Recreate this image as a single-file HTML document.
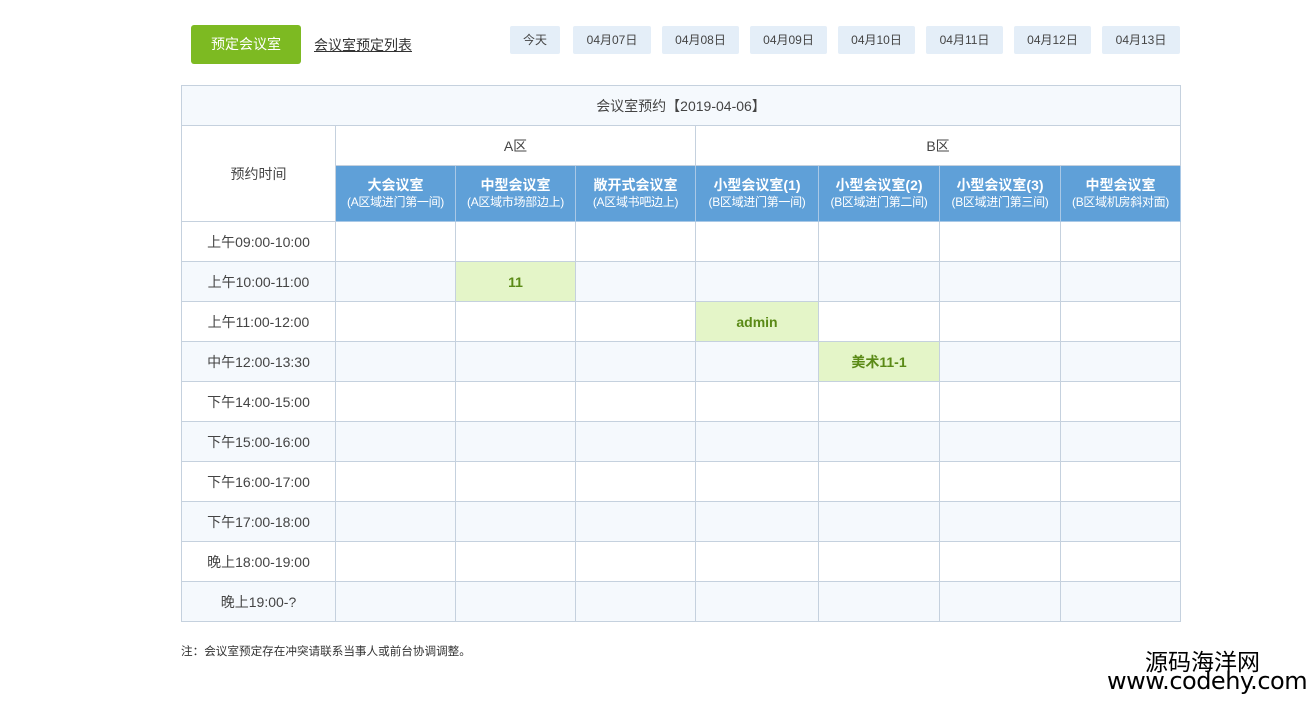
<!DOCTYPE html>
<html><head><meta charset="utf-8"><style>
*{margin:0;padding:0;box-sizing:border-box}
body{width:1312px;height:701px;background:#fff;font-family:"Liberation Sans","Noto Sans CJK SC",sans-serif;color:#333;position:relative;overflow:hidden}
.btn{position:absolute;left:191px;top:25px;width:110px;height:39px;background:#7dba22;color:#fff;border-radius:3px;font-size:14px;line-height:39px;text-align:center}
.lnk{position:absolute;left:314px;top:35px;font-size:14px;color:#333;text-decoration:underline}
.d{position:absolute;top:26px;height:28px;background:#e4eef8;font-size:12px;line-height:28px;text-align:center;color:#444;border-radius:2px}
table{position:absolute;left:181px;top:85px;width:999px;border-collapse:collapse;table-layout:fixed;font-size:14px}
td,th{border:1px solid #c5d1de;text-align:center;font-weight:normal;height:40px;color:#444}
th.h{background:#5fa0d8;color:#fff;height:56px;font-size:14px;line-height:16px;border-color:#a9c8e6}
th.h b{font-weight:bold;display:block}
th.h span{font-size:12px;letter-spacing:-0.3px}
tr.l td{background:#f5f9fd}
td.g{background:#e4f5c8 !important;color:#5a8a16;font-weight:bold}
.note{position:absolute;left:181px;top:643px;font-size:11.6px;color:#333}
.wm1{position:absolute;left:1145px;top:647px;font-size:23px;color:#000;font-family:"Noto Sans CJK SC",sans-serif;line-height:26px}
.wm2{position:absolute;left:1107px;top:668px;font-size:24px;color:#000;font-family:"DejaVu Sans",sans-serif;line-height:26px;letter-spacing:-0.5px}
</style></head><body>
<div class="btn">预定会议室</div>
<div class="lnk">会议室预定列表</div>
<div class="d" style="left:510px;width:50px">今天</div>
<div class="d" style="left:573px;width:78px">04月07日</div>
<div class="d" style="left:662px;width:77px">04月08日</div>
<div class="d" style="left:750px;width:77px">04月09日</div>
<div class="d" style="left:838px;width:77px">04月10日</div>
<div class="d" style="left:926px;width:77px">04月11日</div>
<div class="d" style="left:1014px;width:77px">04月12日</div>
<div class="d" style="left:1102px;width:78px">04月13日</div>
<table>
<colgroup><col style="width:154px"><col style="width:120px"><col style="width:120px"><col style="width:120px"><col style="width:123px"><col style="width:121px"><col style="width:121px"><col style="width:120px"></colgroup>
<tr><td colspan="8" style="background:#f5f9fd">会议室预约【2019-04-06】</td></tr>
<tr><td rowspan="2">预约时间</td><td colspan="3">A区</td><td colspan="4">B区</td></tr>
<tr>
<th class="h"><b>大会议室</b><span>(A区域进门第一间)</span></th>
<th class="h"><b>中型会议室</b><span>(A区域市场部边上)</span></th>
<th class="h"><b>敞开式会议室</b><span>(A区域书吧边上)</span></th>
<th class="h"><b>小型会议室(1)</b><span>(B区域进门第一间)</span></th>
<th class="h"><b>小型会议室(2)</b><span>(B区域进门第二间)</span></th>
<th class="h"><b>小型会议室(3)</b><span>(B区域进门第三间)</span></th>
<th class="h"><b>中型会议室</b><span>(B区域机房斜对面)</span></th>
</tr>
<tr><td>上午09:00-10:00</td><td></td><td></td><td></td><td></td><td></td><td></td><td></td></tr>
<tr class="l"><td>上午10:00-11:00</td><td></td><td class="g">11</td><td></td><td></td><td></td><td></td><td></td></tr>
<tr><td>上午11:00-12:00</td><td></td><td></td><td></td><td class="g">admin</td><td></td><td></td><td></td></tr>
<tr class="l"><td>中午12:00-13:30</td><td></td><td></td><td></td><td></td><td class="g">美术11-1</td><td></td><td></td></tr>
<tr><td>下午14:00-15:00</td><td></td><td></td><td></td><td></td><td></td><td></td><td></td></tr>
<tr class="l"><td>下午15:00-16:00</td><td></td><td></td><td></td><td></td><td></td><td></td><td></td></tr>
<tr><td>下午16:00-17:00</td><td></td><td></td><td></td><td></td><td></td><td></td><td></td></tr>
<tr class="l"><td>下午17:00-18:00</td><td></td><td></td><td></td><td></td><td></td><td></td><td></td></tr>
<tr><td>晚上18:00-19:00</td><td></td><td></td><td></td><td></td><td></td><td></td><td></td></tr>
<tr class="l"><td>晚上19:00-?</td><td></td><td></td><td></td><td></td><td></td><td></td><td></td></tr>
</table>
<div class="note">注：会议室预定存在冲突请联系当事人或前台协调调整。</div>
<div class="wm1">源码海洋网</div>
<div class="wm2">www.codehy.com</div>
</body></html>
